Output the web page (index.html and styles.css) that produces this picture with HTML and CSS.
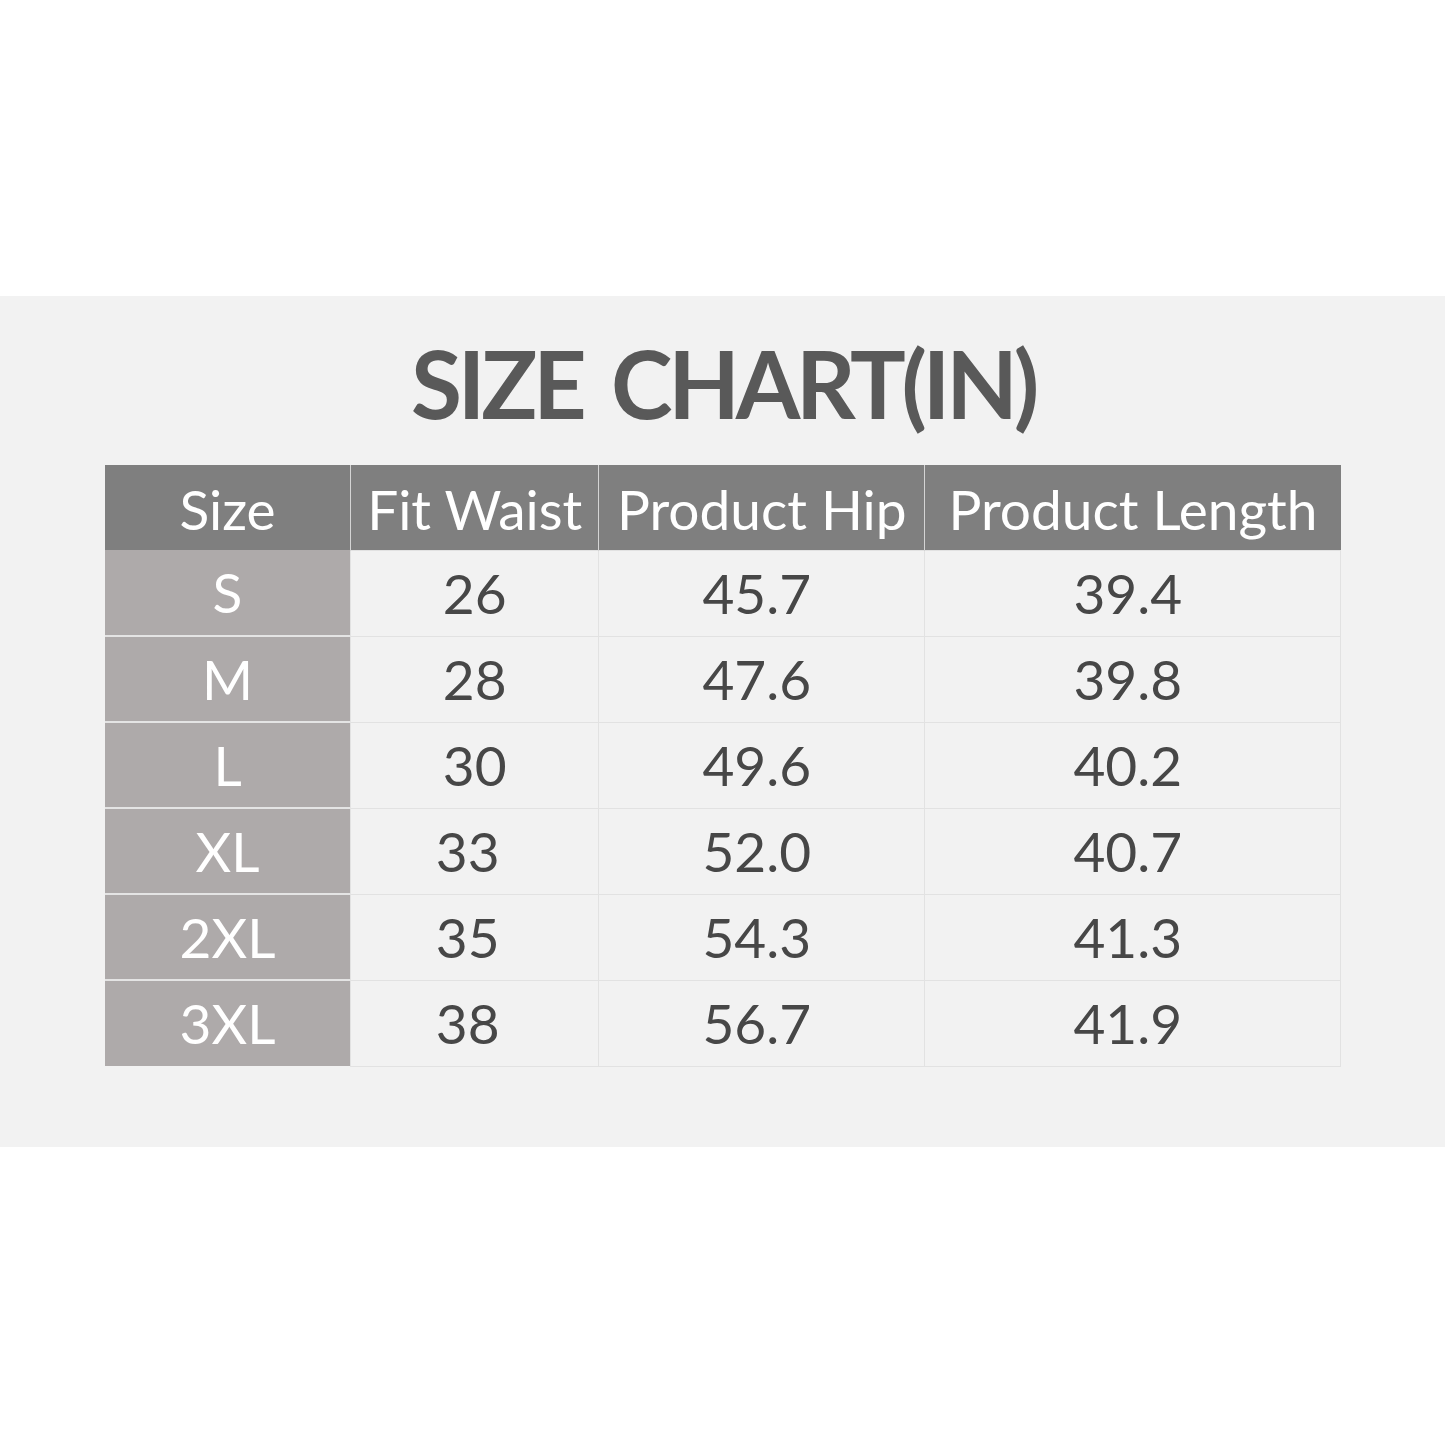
FILE: index.html
```html
<!DOCTYPE html>
<html lang="en">
<head>
<meta charset="utf-8">
<title>Size Chart</title>
<link rel="stylesheet" href="styles.css">
</head>
<body>
<div class="page">
  <section class="panel">
    <h1 class="title">SIZE CHART(IN)</h1>
    <table class="chart">
      <colgroup>
        <col class="c1"><col class="c2"><col class="c3"><col class="c4">
      </colgroup>
      <thead>
        <tr><th>Size</th><th>Fit Waist</th><th>Product Hip</th><th>Product Length</th></tr>
      </thead>
      <tbody>
        <tr><th>S</th><td>26</td><td class="wide">45.7</td><td class="wide">39.4</td></tr>
        <tr><th>M</th><td>28</td><td class="wide">47.6</td><td class="wide">39.8</td></tr>
        <tr><th>L</th><td>30</td><td class="wide">49.6</td><td class="wide">40.2</td></tr>
        <tr><th>XL</th><td class="shift">33</td><td class="wide">52.0</td><td class="wide">40.7</td></tr>
        <tr><th>2XL</th><td class="shift">35</td><td class="wide">54.3</td><td class="wide">41.3</td></tr>
        <tr><th>3XL</th><td class="shift">38</td><td class="wide">56.7</td><td class="wide">41.9</td></tr>
      </tbody>
    </table>
  </section>
</div>
</body>
</html>
```
FILE: styles.css
```css
html, body {
  margin: 0;
  padding: 0;
  background: #ffffff;
}
.page {
  width: 1445px;
  height: 1445px;
  padding-top: 296px;
  box-sizing: border-box;
  font-family: Lato, "Open Sans", sans-serif;
}
.panel {
  background: #f2f2f2;
  height: 851px;
  box-sizing: border-box;
  padding: 0 104px 0 105px;
  display: flex;
  flex-direction: column;
  align-items: center;
}
.title {
  margin: 0;
  height: 169px;
  display: flex;
  align-items: center;
  justify-content: center;
  font-size: 93px;
  font-weight: 700;
  color: #595959;
  letter-spacing: -4.2px;
  word-spacing: 10px;
  padding-top: 4px;
  box-sizing: border-box;
}
.chart {
  width: 1236px;
  border-collapse: collapse;
  table-layout: fixed;
}
.c1 { width: 246px; }
.c2 { width: 248px; }
.c3 { width: 326px; }
.c4 { width: 416px; }
.chart th, .chart td {
  height: 86px;
  padding: 0;
  box-sizing: border-box;
  text-align: center;
  font-size: 55px;
  font-weight: 400;
  line-height: 1;
}
.chart thead th {
  background: #7f7f7f;
  color: #ffffff;
  height: 85px;
  padding-top: 4px;
  border-left: 1px solid #d4d4d4;
}
.chart thead th:first-child {
  border-left: none;
}
.chart tbody th {
  background: #aeaaaa;
  color: #ffffff;
  border-top: 2px solid #e4e4e4;
}
.chart tbody tr:first-child th {
  border-top: none;
}
.chart tbody td {
  background: #f2f2f2;
  color: #474747;
  border: 1px solid #e2e2e2;
}
.chart tbody td.shift {
  padding-right: 14px;
}
.chart tbody td.wide {
  padding-right: 10px;
}
```
